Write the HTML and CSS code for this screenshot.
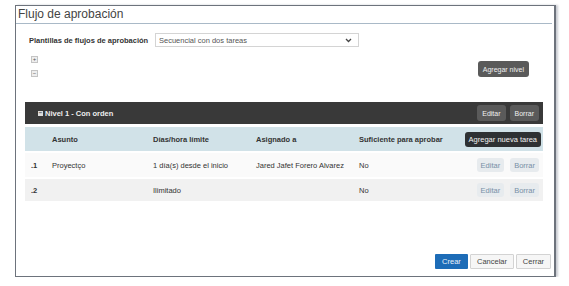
FILE: index.html
```html
<!DOCTYPE html>
<html lang="es">
<head>
  <meta charset="UTF-8" />
  <title>Flujo de aprobación</title>
  <link rel="stylesheet" href="styles.css">
</head>
<body>
  <div class="dialog">
    <div class="dialog-title">Flujo de aprobación</div>

    <div class="content">
      <div class="template-row">
        <label>Plantillas de flujos de aprobación</label>
        <div class="select">
          <span>Secuencial con dos tareas</span>
          <svg width="7" height="5" viewBox="0 0 7 5"><path d="M1 1 L3.5 3.5 L6 1" fill="none" stroke="#444" stroke-width="1.3"/></svg>
        </div>
      </div>

      <div class="tools-row">
        <div class="toggles">
          <span class="toggle">+</span>
          <span class="toggle">&minus;</span>
        </div>
        <button class="btn btn-dark">Agregar nivel</button>
      </div>

      <div class="level-bar">
        <span class="level-name"><span class="box-icon">&minus;</span>Nivel 1 - Con orden</span>
        <div class="btn-group">
          <button class="btn btn-dark">Editar</button>
          <button class="btn btn-dark">Borrar</button>
        </div>
      </div>

      <div class="task-row task-head">
        <span></span>
        <span>Asunto</span>
        <span>Días/hora límite</span>
        <span>Asignado a</span>
        <span>Suficiente para aprobar</span>
        <span class="actions"><button class="btn btn-black">Agregar nueva tarea</button></span>
      </div>
      <div class="task-row">
        <span class="num">.1</span>
        <span>Proyectço</span>
        <span>1 día(s) desde el inicio</span>
        <span>Jared Jafet Forero Alvarez</span>
        <span>No</span>
        <span class="actions">
          <button class="btn btn-light">Editar</button>
          <button class="btn btn-light">Borrar</button>
        </span>
      </div>
      <div class="task-row alt">
        <span class="num">.2</span>
        <span></span>
        <span>Ilimitado</span>
        <span></span>
        <span>No</span>
        <span class="actions">
          <button class="btn btn-light">Editar</button>
          <button class="btn btn-light">Borrar</button>
        </span>
      </div>
    </div>

    <div class="footer">
      <button class="btn btn-primary">Crear</button>
      <button class="btn btn-default">Cancelar</button>
      <button class="btn btn-default">Cerrar</button>
    </div>
  </div>
</body>
</html>
```

FILE: styles.css
```css
body {
  margin: 0;
  background: #fff;
  font-family: "Liberation Sans", Arial, sans-serif;
  color: #333;
}
.dialog {
  margin: 5px 0 0 15px;
  width: 541px;
  height: 272px;
  border: 1px solid #6d737c;
  border-right-width: 2px;
  box-shadow: 2px 0 2px #c9ccd2;
  display: flex;
  flex-direction: column;
  box-sizing: border-box;
}
.dialog-title {
  font-size: 12px;
  line-height: 17px;
  color: #444;
  padding-left: 2px;
  margin: 0 2px 0 0;
  border-bottom: 1px solid #a9b9c7;
}
.content {
  padding: 0 11px 0 9px;
}
.template-row {
  display: flex;
  align-items: center;
  margin-top: 9px;
  font-size: 7.5px;
}
.template-row label {
  font-weight: bold;
  padding-left: 4px;
  width: 126px;
  white-space: nowrap;
}
.select {
  width: 193px;
  height: 12px;
  border: 1px solid #d4d4d4;
  display: flex;
  align-items: center;
  justify-content: space-between;
  padding: 0 6px 0 3px;
  color: #555;
}
.tools-row {
  display: flex;
  justify-content: space-between;
  align-items: flex-start;
  margin-top: 9px;
  padding-right: 14px;
}
.toggles {
  display: flex;
  flex-direction: column;
  gap: 7px;
  padding-left: 6px;
}
.toggle {
  width: 5px;
  height: 5px;
  border: 1px solid #c4c4c4;
  background: #eee;
  font-size: 6px;
  line-height: 5px;
  text-align: center;
  color: #555;
}
.tools-row .btn { margin-top: 5px; }
.btn {
  font-family: "Liberation Sans", Arial, sans-serif;
  font-size: 7px;
  border: none;
  border-radius: 3px;
  padding: 0 5px;
  height: 16px;
  cursor: pointer;
}
.btn-dark {
  background: #5a5a5a;
  color: #f0f0f0;
}
.btn-black {
  background: #2e3133;
  color: #f2f2f2;
  height: 15px;
  padding: 0 4px;
  font-size: 7.5px;
}
.btn-light {
  background: #e7ebee;
  color: #7790a6;
  height: 14px;
  padding: 0 4px;
  font-size: 7.5px;
}
.level-bar {
  margin-top: 25px;
  height: 22px;
  background: #393939;
  display: flex;
  align-items: center;
  justify-content: space-between;
  padding: 0 4px 0 13px;
}
.level-name {
  color: #eee;
  font-size: 7.5px;
  font-weight: bold;
  display: flex;
  align-items: center;
}
.box-icon {
  display: inline-block;
  width: 5px;
  height: 5px;
  background: #ddd;
  color: #393939;
  font-size: 6px;
  line-height: 5px;
  text-align: center;
  margin-right: 2px;
}
.btn-group {
  display: flex;
  gap: 4px;
}
.task-row {
  display: grid;
  grid-template-columns: 27px 101px 103px 103px 1fr auto;
  align-items: center;
  height: 24px;
  margin-top: 2px;
  font-size: 7.5px;
  background: #fafafa;
}
.task-row > span:first-child { padding-left: 6px; }
.task-head {
  margin-top: 3px;
  background: #d1e2e8;
  font-weight: bold;
}
.task-row.alt {
  background: #f1f1f1;
  height: 22px;
}
.num { font-weight: bold; }
.actions {
  display: flex;
  gap: 6px;
  padding-right: 4px;
}
.task-head .actions { padding-right: 2px; }
.footer {
  margin-top: auto;
  display: flex;
  justify-content: flex-end;
  gap: 2px;
  padding: 0 3px 7px 0;
}
.footer .btn {
  height: 15px;
  border-radius: 1px;
  font-size: 7.5px;
}
.btn-primary {
  background: #1d6cb7;
  color: #eaf2fb;
  width: 33px;
}
.btn-default {
  background: #f6f6f6;
  border: 1px solid #d3d3d3;
  color: #444;
}
.footer .btn-default:nth-child(2) { width: 44px; }
.footer .btn-default:nth-child(3) { width: 35px; }
```
